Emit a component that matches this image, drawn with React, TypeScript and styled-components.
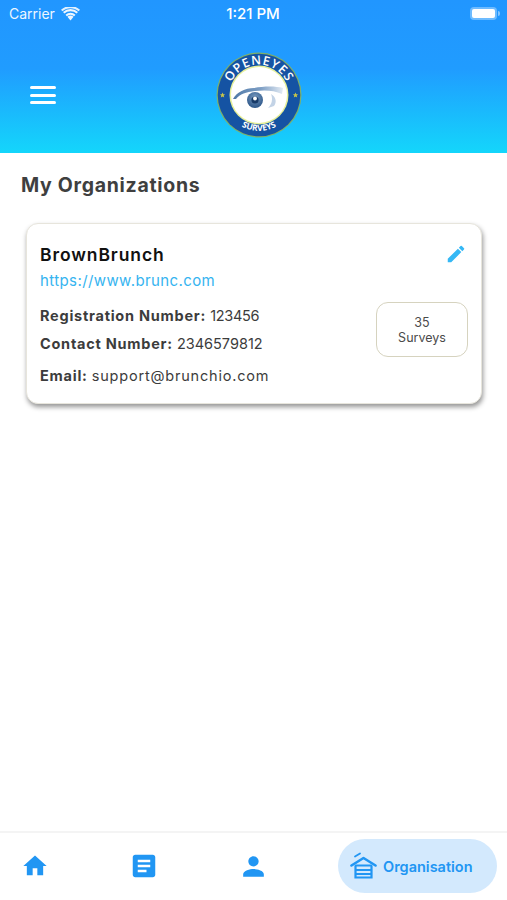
import styled, { createGlobalStyle } from 'styled-components';
import { MdArticle, MdEdit, MdHome, MdPerson } from 'react-icons/md';

const GlobalStyle = createGlobalStyle`
  html, body {
    margin: 0;
    padding: 0;
    background: #fff;
    font-family: Inter, "Noto Sans", sans-serif;
  }
  * {
    box-sizing: border-box;
  }
`;

const Logo = () => (
  <LogoSvg viewBox="0 0 86 86">
    <defs>
      <path id="arcTop" d="M 12.5 43 A 30.5 30.5 0 0 1 73.5 43" />
      <path id="arcBottom" d="M 6.5 48 A 37 37 0 0 0 79.5 48" />
      <linearGradient id="lid" x1="0" x2="1" y1="0" y2="0">
        <stop offset="0" stopColor="#4f79a8" />
        <stop offset="0.55" stopColor="#7d9ec4" />
        <stop offset="1" stopColor="#e3ebf4" />
      </linearGradient>
      <radialGradient id="iris" cx="0.5" cy="0.35" r="0.75">
        <stop offset="0" stopColor="#7a9cc0" />
        <stop offset="1" stopColor="#1f4a80" />
      </radialGradient>
    </defs>
    <circle cx="43" cy="43" r="42.5" fill="#7fb069" />
    <circle cx="43" cy="43" r="41.3" fill="#1553a3" />
    <circle cx="43" cy="43" r="29.5" fill="#e6ef9a" />
    <circle cx="43" cy="43" r="28" fill="#fff" />
    <text fill="#fff" fontSize="12.5" fontWeight="600" letterSpacing="0.9" textAnchor="middle">
      <textPath href="#arcTop" startOffset="50%">OPENEYES</textPath>
    </text>
    <text fill="#fff" fontSize="8.4" fontWeight="700" textAnchor="middle">
      <textPath href="#arcBottom" startOffset="50%">SURVEYS</textPath>
    </text>
    <path d="M7 42.5l.8 1.8 1.9.1-1.5 1.2.5 1.9-1.7-1-1.7 1 .5-1.9-1.5-1.2 1.9-.1z" fill="#c9c64a" transform="translate(-0.5 -2)" />
    <path d="M79 42.5l.8 1.8 1.9.1-1.5 1.2.5 1.9-1.7-1-1.7 1 .5-1.9-1.5-1.2 1.9-.1z" fill="#c9c64a" transform="translate(0.5 -2)" />
    <path d="M17 47 C 21 40 29 36 38 36 C 48 34 60 34 67 36 L 66 42 C 58 38 48 38 39 39 C 30 40 24 42 20 47 Z" fill="url(#lid)" />
    <path d="M55 42 C 60 45 61 50 58 54 L 52 56 C 56 52 57 47 55 42 Z" fill="#c3d3e6" />
    <circle cx="39" cy="48" r="8" fill="url(#iris)" />
    <circle cx="39" cy="48" r="3.6" fill="#173a68" />
    <circle cx="39" cy="46.5" r="1.9" fill="#fff" />
  </LogoSvg>
);

const WifiIcon = () => (
  <svg width="19" height="14" viewBox="0 0 19 14">
    <path d="M9.5 13.4 L6.4 9.8 A4.8 4.8 0 0 1 12.6 9.8 Z" fill="#fff" />
    <path d="M4.5 7.7 A7.7 7.7 0 0 1 14.5 7.7 L13.2 9.2 A5.8 5.8 0 0 0 5.8 9.2 Z" fill="#fff" />
    <path d="M2 5 A11 11 0 0 1 17 5 L15.6 6.6 A9 9 0 0 0 3.4 6.6 Z" fill="#fff" />
    <path d="M0 2.8 A14 14 0 0 1 19 2.8 L17.6 4.3 A12 12 0 0 0 1.4 4.3 Z" fill="#fff" opacity="0.95" />
  </svg>
);

const OrganisationIcon = () => (
  <svg width="27" height="28" viewBox="0 0 27 28" fill="none" stroke="#2196f3" strokeLinecap="round">
    <path d="M1.5 13.5 L13.5 6 L25.5 13.5" strokeWidth="2.6" strokeLinejoin="round" />
    <path d="M5 4.5 L10 1.5" strokeWidth="1.8" />
    <path d="M5.5 14 V25.5 H21.5 V14" strokeWidth="2.2" />
    <path d="M6 13.5 H21 M6 18 H21 M6 22 H21" strokeWidth="2.2" />
  </svg>
);

export default function App() {
  return (
    <>
      <GlobalStyle />
      <Page>
        <Header>
          <StatusBar>
            <Carrier>
              Carrier
              <WifiIcon />
            </Carrier>
            <Clock>1:21 PM</Clock>
            <Battery>
              <BatteryFill />
            </Battery>
          </StatusBar>
          <HeaderRow>
            <MenuButton>
              <MenuLine />
              <MenuLine />
              <MenuLine />
            </MenuButton>
            <Logo />
          </HeaderRow>
        </Header>

        <Content>
          <Heading>My Organizations</Heading>
          <Card>
            <CardTop>
              <OrgName>BrownBrunch</OrgName>
              <EditIcon size={22} />
            </CardTop>
            <OrgLink>https://www.brunc.com</OrgLink>
            <CardMiddle>
              <Details>
                <DetailLine>
                  <strong>Registration Number:</strong> <RegValue>123456</RegValue>
                </DetailLine>
                <DetailLine>
                  <strong>Contact Number:</strong> 2346579812
                </DetailLine>
              </Details>
              <SurveyBadge>
                <span>35</span>
                <span>Surveys</span>
              </SurveyBadge>
            </CardMiddle>
            <EmailLine>
              <strong>Email:</strong> <EmailValue>support@brunchio.com</EmailValue>
            </EmailLine>
          </Card>
        </Content>

        <BottomNav>
          <NavItem>
            <MdHome size={28} />
          </NavItem>
          <NavItem>
            <MdArticle size={30} />
          </NavItem>
          <NavItem>
            <MdPerson size={31} />
          </NavItem>
          <ActivePill>
            <OrganisationIcon />
            Organisation
          </ActivePill>
        </BottomNav>
      </Page>
    </>
  );
}

const Page = styled.div`
  width: 507px;
  height: 900px;
  display: flex;
  flex-direction: column;
  background: #fff;
  overflow: hidden;
`;

const Header = styled.header`
  height: 153px;
  flex-shrink: 0;
  background: linear-gradient(180deg, #2196ff 0%, #209cff 45%, #14d6fb 100%);
`;

const StatusBar = styled.div`
  height: 28px;
  display: grid;
  grid-template-columns: 1fr auto 1fr;
  align-items: center;
  padding: 0 10px 1px 9px;
  color: #fff;
  font-size: 14px;
`;

const Carrier = styled.div`
  display: flex;
  align-items: center;
  gap: 6px;
  opacity: 0.92;
`;

const Clock = styled.div`
  font-weight: 500;
  font-size: 15px;
`;

const Battery = styled.div`
  position: relative;
  justify-self: end;
  width: 27px;
  height: 13px;
  padding: 2px;
  border-radius: 4px;
  background: rgba(255, 255, 255, 0.35);

  &::after {
    content: '';
    position: absolute;
    top: 4px;
    right: -3px;
    width: 2px;
    height: 5px;
    border-radius: 0 2px 2px 0;
    background: rgba(255, 255, 255, 0.45);
  }
`;

const BatteryFill = styled.div`
  width: 100%;
  height: 100%;
  border-radius: 2px;
  background: #fff;
`;

const HeaderRow = styled.div`
  display: flex;
  align-items: center;
  gap: 160px;
  padding: 24px 0 0 30px;
`;

const MenuButton = styled.div`
  width: 26px;
  display: flex;
  flex-direction: column;
  gap: 4.5px;
`;

const MenuLine = styled.span`
  display: block;
  height: 3px;
  border-radius: 2px;
  background: #fff;
`;

const LogoSvg = styled.svg`
  width: 86px;
  height: 86px;
  overflow: visible;
  font-family: "Open Sans", sans-serif;
  flex-shrink: 0;
`;

const Content = styled.main`
  flex: 1;
  padding: 20px 25px 0 21px;
`;

const Heading = styled.h1`
  margin: 0 0 26px;
  font-size: 19.5px;
  line-height: 24px;
  font-weight: 700;
  letter-spacing: 0.7px;
  color: #3f3f3f;
`;

const Card = styled.section`
  width: 456px;
  height: 181px;
  margin-left: 5px;
  padding: 18px 13px 0 13px;
  border: 1px solid #e7e5dc;
  border-radius: 12px;
  background: #fff;
  box-shadow: 1px 3px 5px rgba(0, 0, 0, 0.42);
`;

const CardTop = styled.div`
  height: 24px;
  display: flex;
  align-items: center;
  justify-content: space-between;
`;

const EditIcon = styled(MdEdit)`
  margin-right: 1px;
  color: #35b8f5;
`;

const OrgName = styled.div`
  font-size: 17.5px;
  line-height: 23px;
  font-weight: 600;
  letter-spacing: 0.9px;
  color: #111;
`;

const OrgLink = styled.div`
  margin-top: 5px;
  font-size: 15px;
  line-height: 20px;
  letter-spacing: 0.4px;
  color: #36b4f0;
`;

const CardMiddle = styled.div`
  display: flex;
  align-items: flex-start;
  justify-content: space-between;
  margin-top: 15px;
`;

const Details = styled.div`
  display: flex;
  flex-direction: column;
  gap: 8px;
`;

const DetailLine = styled.div`
  font-size: 14.5px;
  line-height: 20px;
  color: #3c3c3c;

  strong {
    font-weight: 700;
    letter-spacing: 0.75px;
  }
`;

const RegValue = styled.span`
  letter-spacing: -0.3px;
`;

const SurveyBadge = styled.div`
  width: 92px;
  height: 55px;
  margin-top: -4px;
  display: flex;
  flex-direction: column;
  align-items: center;
  justify-content: center;
  border: 1.5px solid #d6d3bf;
  border-radius: 12px;
  font-size: 12.5px;
  line-height: 15px;
  color: #4a4a4a;
`;

const EmailLine = styled(DetailLine)`
  margin-top: 9px;
`;

const EmailValue = styled.span`
  letter-spacing: 0.8px;
`;

const BottomNav = styled.nav`
  height: 69px;
  flex-shrink: 0;
  display: flex;
  align-items: center;
  gap: 39px;
  padding: 0 10px 1px 0;
  border-top: 2px solid #f4f4f4;
  color: #2196f3;
`;

const NavItem = styled.div`
  width: 70px;
  display: flex;
  justify-content: center;
`;

const ActivePill = styled.div`
  margin-left: auto;
  width: 159px;
  height: 54px;
  display: flex;
  align-items: center;
  gap: 6px;
  padding-left: 12px;
  border-radius: 27px;
  background: #d3e9fd;
  font-size: 14.5px;
  font-weight: 600;
  color: #2196f3;
`;
